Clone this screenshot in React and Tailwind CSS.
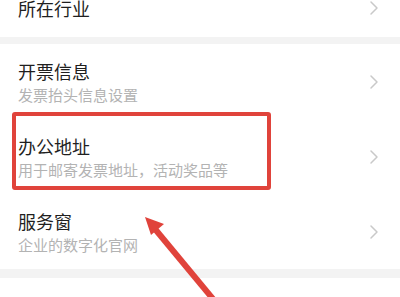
import React from "react";

const rows = [
  { title: "开票信息", sub: "发票抬头信息设置" },
  { title: "办公地址", sub: "用于邮寄发票地址，活动奖品等" },
  { title: "服务窗", sub: "企业的数字化官网" },
];

function Chevron() {
  return (
    <svg width="10" height="16" viewBox="0 0 10 16" className="shrink-0">
      <path d="M2 2 L8 8 L2 14" fill="none" stroke="#c9c9c9" strokeWidth="1.5" strokeLinecap="round" strokeLinejoin="round" />
    </svg>
  );
}

export default function App() {
  return (
    <div
      className="relative w-[400px] h-[297px] overflow-hidden bg-[#f3f3f3]"
      style={{ fontFamily: '"Noto Sans CJK SC", "Noto Sans", sans-serif' }}
    >
      {/* cut-off row at the top */}
      <div className="h-[40px] bg-white">
        <div className="flex items-center justify-between h-[22px] -mt-[3px] pl-[18px] pr-[21px]">
          <span className="text-[18px] leading-[22px] text-[#1f1f1f]">所在行业</span>
          <Chevron />
        </div>
      </div>

      <div className="mt-[7px] bg-white">
        {rows.map((r) => (
          <div key={r.title} className="h-[75px] flex items-center justify-between pl-[18px] pr-[21px]">
            <div className="flex flex-col pt-[2px]">
              <span className="text-[18px] leading-[22px] text-[#1f1f1f]">{r.title}</span>
              <span className="mt-[3px] text-[15px] leading-[20px] text-[#b3b3b3]">{r.sub}</span>
            </div>
            <Chevron />
          </div>
        ))}
      </div>

      <div className="h-[9px] bg-[#f3f3f3]" />
      <div className="h-[20px] bg-white" />

      {/* annotation: red box */}
      <div className="absolute left-[12px] top-[112px] w-[259px] h-[78px] border-[4px] border-[#e0433b] rounded-[3px]" />

      {/* annotation: red arrow */}
      <svg className="absolute left-0 top-0" width="400" height="297" viewBox="0 0 400 297">
        <line x1="155" y1="229" x2="218" y2="305" stroke="#e0433b" strokeWidth="6" />
        <polygon points="145,217 164,224 151,235" fill="#e0433b" />
      </svg>
    </div>
  );
}
